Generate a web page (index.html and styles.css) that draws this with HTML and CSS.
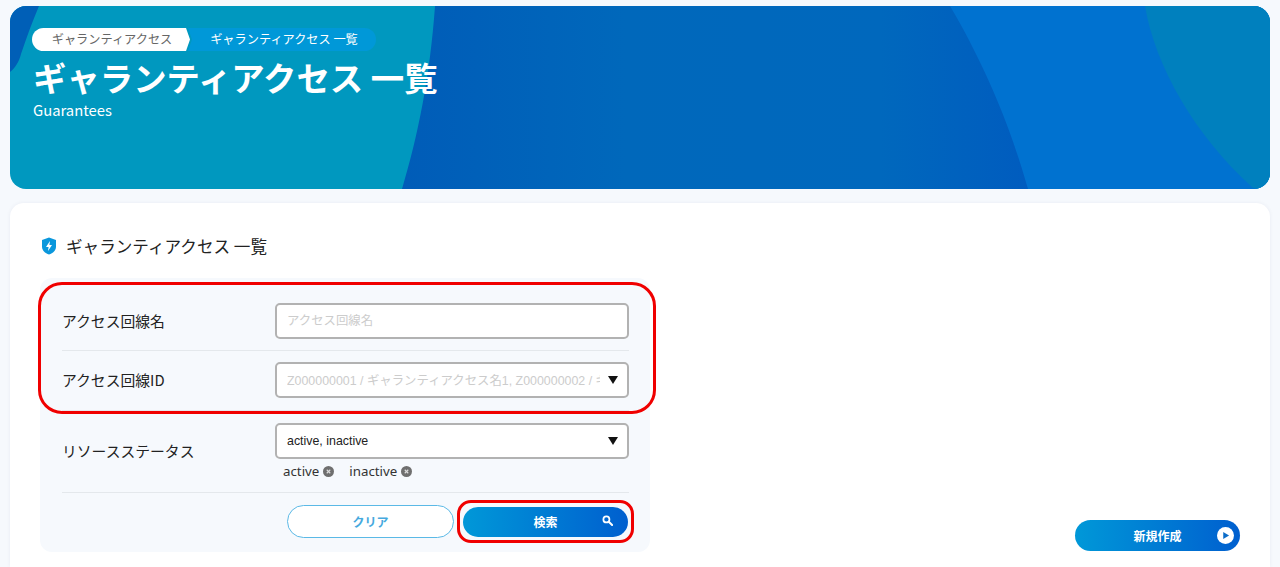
FILE: index.html
```html
<!DOCTYPE html>
<html lang="ja">
<head>
<meta charset="utf-8">
<title>ギャランティアクセス 一覧</title>
<link rel="stylesheet" href="styles.css">
</head>
<body>
<header class="hero">
  <svg class="hero-bg" viewBox="0 0 1260 183" preserveAspectRatio="none" aria-hidden="true">
    <defs>
      <linearGradient id="deep" x1="0" y1="0" x2="1" y2="0">
        <stop offset="0" stop-color="#005cb8"/>
        <stop offset="0.35" stop-color="#0068bb"/>
        <stop offset="0.75" stop-color="#0068bd"/>
        <stop offset="1" stop-color="#005bbf"/>
      </linearGradient>
    </defs>
    <rect width="1260" height="183" fill="#0098bf"/>
    <path d="M0 0H29C23 14 17 30 11 48 C9 56 5 62 0 66Z" fill="#005fb7"/>
    <path d="M425 0C420 70 408 130 392 183H1030V0Z" fill="url(#deep)"/>
    <path d="M940 0C958 30 975 65 987 94C1000 125 1010 155 1018 183H1260V0Z" fill="#0072d0"/>
    <path d="M1135 0C1145 60 1185 130 1243 182L1260 183V0Z" fill="#0080be"/>
  </svg>
  <div class="hero-content">
    <nav class="crumbs">
      <span class="crumb crumb-first">ギャランティアクセス</span>
      <span class="crumb crumb-last">ギャランティアクセス 一覧</span>
    </nav>
    <h1 class="hero-title">ギャランティアクセス 一覧</h1>
    <p class="hero-sub">Guarantees</p>
  </div>
</header>

<main class="card">
  <h2 class="section-title">
    <svg class="shield" viewBox="0 0 16 18" aria-hidden="true">
      <path d="M8 0.5L15 3V9.5C15 13.5 12 16.2 8 17.5C4 16.2 1 13.5 1 9.5V3Z" fill="#0a97dc"/>
      <path d="M9 4L5 10H7.6L7 14L11 8H8.4Z" fill="#fff"/>
    </svg>
    ギャランティアクセス 一覧
  </h2>
  <div class="card-body">
    <form class="panel">
      <div class="row row-first">
        <label class="row-label">アクセス回線名</label>
        <input class="field" type="text" placeholder="アクセス回線名">
      </div>
      <div class="row">
        <label class="row-label">アクセス回線ID</label>
        <div class="field select">
          <span class="select-text placeholder">Z000000001 / ギャランティアクセス名1, Z000000002 / ギャランティアクセス名2</span>
          <span class="caret"></span>
        </div>
      </div>
      <div class="row row-status">
        <label class="row-label">リソースステータス</label>
        <div class="stack">
          <div class="field select">
            <span class="select-text">active, inactive</span>
            <span class="caret"></span>
          </div>
          <div class="tags">
            <span class="tag">active<svg class="tag-x" viewBox="0 0 10 10" aria-hidden="true"><circle cx="5" cy="5" r="5" fill="#6f6f6f"/><path d="M3.4 3.4L6.6 6.6M6.6 3.4L3.4 6.6" stroke="#ddd" stroke-width="1"/></svg></span>
            <span class="tag">inactive<svg class="tag-x" viewBox="0 0 10 10" aria-hidden="true"><circle cx="5" cy="5" r="5" fill="#6f6f6f"/><path d="M3.4 3.4L6.6 6.6M6.6 3.4L3.4 6.6" stroke="#ddd" stroke-width="1"/></svg></span>
          </div>
        </div>
      </div>
      <div class="actions">
        <button type="button" class="btn-clear">クリア</button>
        <button type="button" class="btn-primary btn-search">検索
          <svg class="btn-icon-search" viewBox="0 0 12 12" aria-hidden="true"><circle cx="4.8" cy="4.8" r="3.3" fill="none" stroke="#fff" stroke-width="1.9"/><path d="M7.4 7.4L11 11" stroke="#fff" stroke-width="2.2" stroke-linecap="round"/></svg>
        </button>
      </div>
      <span class="mark mark-fields"></span>
      <span class="mark mark-search"></span>
    </form>
    <button type="button" class="btn-primary btn-new">新規作成
      <svg class="btn-icon-play" viewBox="0 0 18 18" aria-hidden="true"><circle cx="9" cy="9" r="9" fill="#fff"/><path d="M6.6 5.2L12.8 9L6.6 12.8Z" fill="#0c6cc8"/></svg>
    </button>
  </div>
</main>
</body>
</html>
```
FILE: styles.css
```css
* { box-sizing: border-box; }
html, body { height: 567px; overflow: hidden; }
body {
  margin: 0;
  padding: 6px 10px 0;
  background: #f6f9fd;
  color: #222;
  font-family: "Noto Sans CJK JP", "Noto Sans", sans-serif;
}
.hero {
  position: relative;
  height: 183px;
  border-radius: 16px;
  overflow: hidden;
  color: #fff;
}
.hero-bg { position: absolute; inset: 0; width: 100%; height: 100%; display: block; }
.hero-content { position: relative; padding: 22px 0 0 22px; }
.crumbs { display: flex; height: 23px; font-size: 12.2px; line-height: 23px; }
.crumb { display: block; text-align: center; }
.crumb-first {
  width: 158px;
  padding-left: 2px;
  background: #fff;
  color: #666;
  border-radius: 12px 0 0 12px;
  clip-path: polygon(0 0, 154px 0, 158px 50%, 154px 100%, 0 100%);
}
.crumb-last {
  width: 188px;
  margin-left: -2px;
  padding-left: 4px;
  background: #0098d8;
  border-radius: 0 12px 12px 0;
  clip-path: polygon(0 0, 100% 0, 100% 100%, 0 100%, 4px 50%);
}
.hero-title {
  margin: 3px 0 0 1px;
  font-size: 33.4px;
  line-height: 46px;
  font-weight: 700;
}
.hero-sub { margin: 0 0 0 1px; font-size: 14.8px; line-height: 20px; }

.card {
  margin-top: 14px;
  height: 364px;
  padding: 30px 30px 0;
  background: #fff;
  border-radius: 14px 14px 0 0;
  box-shadow: 0 0 4px rgba(0, 40, 90, 0.06);
}
.section-title {
  display: flex;
  align-items: center;
  gap: 9px;
  margin: 0;
  height: 26px;
  font-size: 16.6px;
  font-weight: 400;
  line-height: 25px;
}
.shield { width: 16px; height: 18px; flex: none; margin-left: 1px; }
.card-body {
  display: flex;
  justify-content: space-between;
  align-items: flex-end;
  margin-top: 19px;
}

.panel {
  position: relative;
  width: 610px;
  height: 274px;
  padding: 0 21px 0 22px;
  background: #f6f9fd;
  border-radius: 12px;
}
.row {
  display: grid;
  grid-template-columns: 213px 354px;
  align-items: center;
  padding: 11px 0 12px;
  border-bottom: 1px solid #e4e8ec;
}
.row-first { padding-top: 25px; padding-bottom: 11px; }
.row-status { padding: 12px 0 0; height: 82px; align-items: start; }
.row-status .row-label { margin-top: 18px; }
.row-label { font-size: 14.8px; line-height: 20px; }
.field {
  display: block;
  width: 354px;
  height: 36px;
  padding: 0 10px;
  background: #fff;
  border: 2px solid #b2b2b2;
  border-radius: 5px;
  outline: none;
  font-family: "Liberation Sans", "Noto Sans CJK JP", sans-serif;
  font-size: 12.4px;
  color: #222;
}
.field::placeholder { color: #ccc; opacity: 1; }
.select { display: flex; align-items: center; gap: 8px; }
.select-text { flex: 1; min-width: 0; overflow: hidden; white-space: nowrap; }
.placeholder { color: #ccc; }
.caret {
  flex: none;
  width: 0;
  height: 0;
  border-left: 5px solid transparent;
  border-right: 5px solid transparent;
  border-top: 8px solid #111;
  margin-right: -1px;
}
.tags { display: flex; gap: 15px; padding: 3px 0 0 8px; }
.tag {
  display: flex;
  align-items: center;
  gap: 4px;
  font-family: "Noto Sans", sans-serif;
  font-size: 13.3px;
  line-height: 18px;
  color: #333;
}
.tag-x { width: 11px; height: 11px; margin-top: 1px; }

.actions { display: flex; align-items: center; gap: 9px; padding: 12px 0 0 225px; }
.btn-clear {
  width: 167px;
  height: 33px;
  padding: 0;
  background: #fff;
  border: 1.5px solid #5bb9e6;
  border-radius: 17px;
  color: #45a9de;
  font: 700 12px/1 "Noto Sans CJK JP", sans-serif;
}
.btn-primary {
  position: relative;
  width: 165px;
  padding: 0;
  border: 0;
  background: linear-gradient(90deg, #0098d8, #005fcf);
  color: #fff;
  font: 700 12px/1 "Noto Sans CJK JP", sans-serif;
}
.btn-search { height: 30px; border-radius: 15px; }
.btn-new { height: 31px; border-radius: 16px; flex: none; margin-bottom: 1px; }
.btn-icon-search { position: absolute; right: 15px; top: 8px; width: 11px; height: 11px; }
.btn-icon-play { position: absolute; right: 6px; top: 7px; width: 17px; height: 17px; }

.mark { position: absolute; border: 3px solid #f00000; pointer-events: none; }
.mark-fields { left: -2px; top: 4px; width: 618px; height: 132px; border-radius: 24px; }
.mark-search { left: 417px; top: 222px; width: 177px; height: 43px; border-radius: 14px; }
```
